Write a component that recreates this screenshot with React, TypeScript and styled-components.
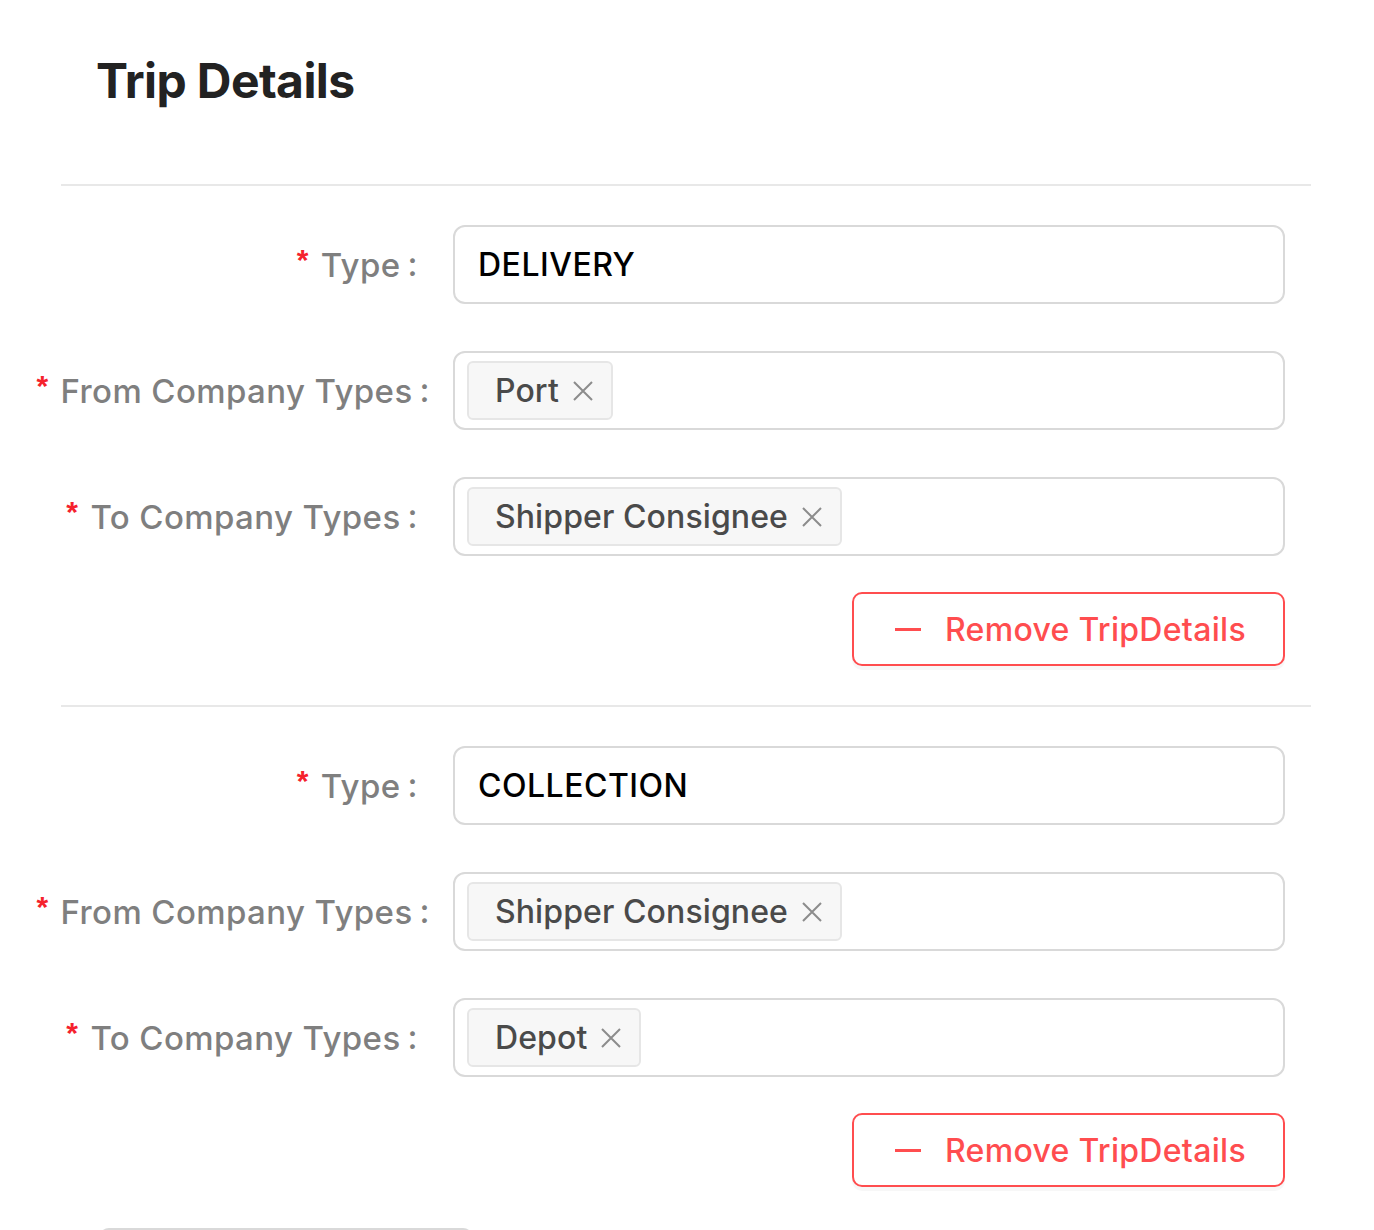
import React from 'react';
import styled, { createGlobalStyle } from 'styled-components';

const GlobalStyle = createGlobalStyle`
  html, body {
    margin: 0;
    padding: 0;
    background: #ffffff;
    overflow: hidden;
  }
  body {
    font-family: Inter, "Noto Sans", "Liberation Sans", sans-serif;
    -webkit-font-smoothing: antialiased;
  }
`;

const Page = styled.div`
  width: 1374px;
  height: 1230px;
  overflow: hidden;
  box-sizing: border-box;
  padding-top: 52px;
`;

const Title = styled.h2`
  margin: 0 0 74px 96px;
  font-size: 48px;
  line-height: 58px;
  font-weight: 700;
  color: #222222;
  letter-spacing: -0.6px;
`;

const Section = styled.div`
  margin: 0 63px 0 61px;
  border-top: 2px solid #e8e8e8;
  padding-top: 39px;
  padding-bottom: 39px;
  display: flex;
  flex-direction: column;
`;

const Row = styled.div`
  display: grid;
  grid-template-columns: 392px 832px;
  align-items: center;
  margin-bottom: 47px;
`;

const Label = styled.label<{ $tight?: boolean }>`
  display: flex;
  justify-content: flex-end;
  align-items: center;
  padding-right: ${p => (p.$tight ? '23px' : '35px')};
  font-size: 33px;
  font-weight: 500;
  letter-spacing: 0.4px;
  color: #7f7f7f;
  white-space: nowrap;
`;

const Required = styled.span`
  color: #f5222d;
  font-size: 30px;
  font-weight: 700;
  margin-right: 12px;
  position: relative;
  top: -5px;
  font-family: "Liberation Sans", sans-serif;
`;

const Colon = styled.span`
  margin-left: 7px;
  position: relative;
  top: -1px;
`;

const InputBox = styled.div`
  box-sizing: border-box;
  height: 79px;
  border: 2px solid #d9d9d9;
  border-radius: 12px;
  display: flex;
  align-items: center;
  padding: 0 23px;
  font-size: 32px;
  font-weight: 500;
  color: #000000;
  letter-spacing: 0.5px;
`;

const SelectBox = styled(InputBox)`
  padding: 0 12px;
`;

const Tag = styled.span`
  box-sizing: border-box;
  height: 59px;
  display: inline-flex;
  align-items: center;
  gap: 13px;
  padding: 0 17px 0 26px;
  background: #f7f7f7;
  border: 2px solid #e6e6e6;
  border-radius: 6px;
  font-size: 32px;
  font-weight: 500;
  color: #4a4a4a;
  letter-spacing: 0.1px;
`;

const CloseIcon = styled.svg`
  width: 22px;
  height: 22px;
  flex: none;
`;

const ButtonRow = styled.div`
  display: flex;
  justify-content: flex-end;
  padding-right: 26px;
  margin-top: -11px;
`;

const DangerButton = styled.button`
  box-sizing: border-box;
  width: 433px;
  height: 74px;
  border: 2px solid #ff4d4f;
  border-radius: 10px;
  background: #ffffff;
  color: #ff4d4f;
  font-family: inherit;
  font-size: 32px;
  font-weight: 500;
  letter-spacing: 0.3px;
  display: flex;
  align-items: center;
  padding: 0 0 0 41px;
  gap: 24px;
  box-shadow: 0 4px 0 rgba(0, 0, 0, 0.03);
  cursor: pointer;
`;

const Minus = styled.span`
  width: 26px;
  height: 3px;
  background: #ff4d4f;
  flex: none;
`;

const AddButton = styled.div`
  margin: 2px 0 0 99px;
  width: 374px;
  height: 74px;
  box-sizing: border-box;
  border: 2px solid #d9d9d9;
  border-radius: 10px;
`;

const Close = () => (
  <CloseIcon viewBox="0 0 22 22">
    <path d="M2 2 L20 20 M20 2 L2 20" stroke="#8c8c8c" strokeWidth="2" fill="none" />
  </CloseIcon>
);

interface TripProps {
  type: string;
  from: string;
  to: string;
}

const TripGroup: React.FC<TripProps> = ({ type, from, to }) => (
  <Section>
    <Row>
      <Label>
        <Required>*</Required>Type<Colon>:</Colon>
      </Label>
      <InputBox>{type}</InputBox>
    </Row>
    <Row>
      <Label $tight>
        <Required>*</Required>From Company Types<Colon>:</Colon>
      </Label>
      <SelectBox>
        <Tag>
          {from}
          <Close />
        </Tag>
      </SelectBox>
    </Row>
    <Row>
      <Label>
        <Required>*</Required>To Company Types<Colon>:</Colon>
      </Label>
      <SelectBox>
        <Tag>
          {to}
          <Close />
        </Tag>
      </SelectBox>
    </Row>
    <ButtonRow>
      <DangerButton>
        <Minus />
        Remove TripDetails
      </DangerButton>
    </ButtonRow>
  </Section>
);

export default function App() {
  return (
    <Page>
      <GlobalStyle />
      <Title>Trip Details</Title>
      <TripGroup type="DELIVERY" from="Port" to="Shipper Consignee" />
      <TripGroup type="COLLECTION" from="Shipper Consignee" to="Depot" />
      <AddButton />
    </Page>
  );
}
